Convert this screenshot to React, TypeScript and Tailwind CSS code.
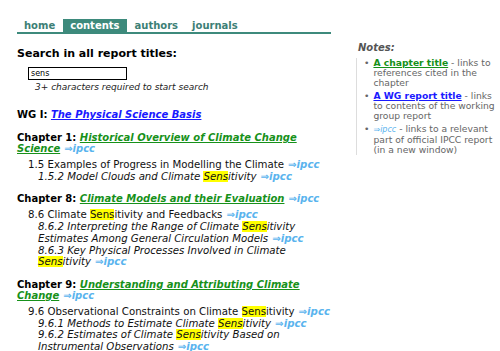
import React from "react";

const FONT = { fontFamily: '"DejaVu Sans", Verdana, sans-serif' };

function Ipcc() {
  return <span className="ml-[4px] italic font-bold text-[#5ab4ee]">⇒ipcc</span>;
}

function Hl({ children }: { children: React.ReactNode }) {
  return <span className="bg-[#ffff00]">{children}</span>;
}

function Chapter({ num, title, children }: { num: string; title: string; children: React.ReactNode }) {
  return (
    <div className="mt-[11px]">
      <p className="text-[10px] leading-[11px] font-bold text-black">
        Chapter {num}: <a className="italic text-[#17911a] underline">{title}</a>
        <Ipcc />
      </p>
      <div className="mt-[5px] pl-[11px] text-[10.2px] leading-[11.7px] text-[#111]">{children}</div>
    </div>
  );
}

export default function App() {
  return (
    <div className="w-[500px] h-[351px] bg-white overflow-hidden flex" style={FONT}>
      <div className="w-[335px] pl-[17px] pt-[19px] shrink-0">
        {/* tabs */}
        <div className="w-[314px] flex items-end border-b-2 border-[#3d8a7c] text-[10px] font-bold leading-[13px] text-[#3d7f76]">
          <span className="pl-[7px] pr-[8px]">home</span>
          <span className="px-[7px] bg-[#3d8a7c] text-white">contents</span>
          <span className="ml-[8px]">authors</span>
          <span className="ml-[14px]">journals</span>
        </div>

        <h1 className="mt-[13px] text-[11px] leading-[14px] font-bold text-black">Search in all report titles:</h1>
        <input
          readOnly
          value="sens"
          className="block mt-[6px] ml-[11px] w-[99px] h-[13px] border border-black px-[2px] text-[8px] leading-[11px] text-black"
        />
        <p className="mt-[2px] ml-[18px] text-[9px] leading-[11px] italic text-[#222]">3+ characters required to start search</p>

        <p className="mt-[16px] text-[10px] leading-[12px] font-bold text-black">
          WG I: <a className="italic text-[#1a1aff] underline">The Physical Science Basis</a>
        </p>

        <Chapter num="1" title="Historical Overview of Climate Change Science">
          <p>1.5 Examples of Progress in Modelling the Climate<Ipcc /></p>
          <p className="pl-[10px] italic">1.5.2 Model Clouds and Climate <Hl>Sens</Hl>itivity<Ipcc /></p>
        </Chapter>

        <Chapter num="8" title="Climate Models and their Evaluation">
          <p>8.6 Climate <Hl>Sens</Hl>itivity and Feedbacks<Ipcc /></p>
          <p className="pl-[10px] italic">8.6.2 Interpreting the Range of Climate <Hl>Sens</Hl>itivity Estimates Among General Circulation Models<Ipcc /></p>
          <p className="pl-[10px] italic">8.6.3 Key Physical Processes Involved in Climate <Hl>Sens</Hl>itivity<Ipcc /></p>
        </Chapter>

        <Chapter num="9" title="Understanding and Attributing Climate Change">
          <p>9.6 Observational Constraints on Climate <Hl>Sens</Hl>itivity<Ipcc /></p>
          <p className="pl-[10px] italic">9.6.1 Methods to Estimate Climate <Hl>Sens</Hl>itivity<Ipcc /></p>
          <p className="pl-[10px] italic">9.6.2 Estimates of Climate <Hl>Sens</Hl>itivity Based on Instrumental Observations<Ipcc /></p>
        </Chapter>
      </div>

      {/* notes */}
      <div className="ml-[21px] pt-[42px] flex-1">
        <p className="ml-[2px] text-[10px] leading-[11px] font-bold italic text-[#555]">Notes:</p>
        <ul className="mt-[5px] border-l border-[#ddd] pl-[7px] text-[9.2px] leading-[10px] text-[#666] space-y-[3px]">
          <li className="flex gap-[4px]">
            <span>•</span>
            <span><a className="font-bold text-[#17911a] underline">A chapter title</a> - links to references cited in the chapter</span>
          </li>
          <li className="flex gap-[4px]">
            <span>•</span>
            <span><a className="font-bold text-[#1a1aff] underline">A WG report title</a> - links to contents of the working group report</span>
          </li>
          <li className="flex gap-[4px]">
            <span>•</span>
            <span><span className="italic text-[8px] text-[#5ab4ee]">⇒ipcc</span> - links to a relevant part of official IPCC report (in a new window)</span>
          </li>
        </ul>
      </div>
    </div>
  );
}
